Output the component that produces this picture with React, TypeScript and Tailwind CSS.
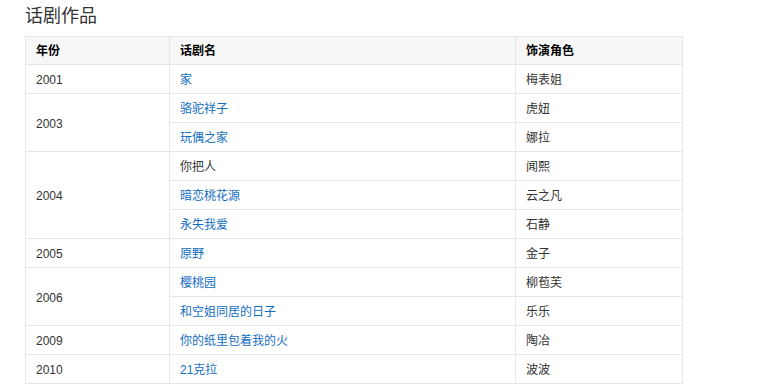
import React from "react";

type Play = { title: string; role: string; link: boolean };
type YearGroup = { year: string; plays: Play[] };

const data: YearGroup[] = [
  { year: "2001", plays: [{ title: "家", role: "梅表姐", link: true }] },
  {
    year: "2003",
    plays: [
      { title: "骆驼祥子", role: "虎妞", link: true },
      { title: "玩偶之家", role: "娜拉", link: true },
    ],
  },
  {
    year: "2004",
    plays: [
      { title: "你把人", role: "闻熙", link: false },
      { title: "暗恋桃花源", role: "云之凡", link: true },
      { title: "永失我爱", role: "石静", link: true },
    ],
  },
  { year: "2005", plays: [{ title: "原野", role: "金子", link: true }] },
  {
    year: "2006",
    plays: [
      { title: "樱桃园", role: "柳苞芙", link: true },
      { title: "和空姐同居的日子", role: "乐乐", link: true },
    ],
  },
  { year: "2009", plays: [{ title: "你的纸里包着我的火", role: "陶冶", link: true }] },
  { year: "2010", plays: [{ title: "21克拉", role: "波波", link: true }] },
];

const App = () => {
  return (
    <div
      className="min-h-screen bg-white pl-[25px] pt-[4px] text-[#333]"
      style={{ fontFamily: '"Liberation Sans", Arial, "Noto Sans CJK SC", sans-serif' }}
    >
      <h2 className="text-[18px] leading-[24px] text-[#333] mb-[8px]">话剧作品</h2>
      <table className="w-[658px] border-collapse text-[12px] leading-[14px]">
        <thead>
          <tr className="bg-[#f7f7f7]">
            <th className="w-[144px] h-[28px] border border-[#e6e6e6] px-[10px] text-left font-bold text-black">年份</th>
            <th className="w-[346px] h-[28px] border border-[#e6e6e6] px-[10px] text-left font-bold text-black">话剧名</th>
            <th className="h-[28px] border border-[#e6e6e6] px-[10px] text-left font-bold text-black">饰演角色</th>
          </tr>
        </thead>
        <tbody>
          {data.map((g) =>
            g.plays.map((p, i) => (
              <tr key={g.year + p.title}>
                {i === 0 && (
                  <td rowSpan={g.plays.length} className="border border-[#e6e6e6] px-[10px] pt-[2px]">
                    {g.year}
                  </td>
                )}
                <td className="h-[29px] border border-[#e6e6e6] px-[10px] pt-[2px]">
                  {p.link ? <a className="text-[#136ec2]">{p.title}</a> : p.title}
                </td>
                <td className="h-[29px] border border-[#e6e6e6] px-[10px] pt-[2px]">{p.role}</td>
              </tr>
            ))
          )}
        </tbody>
      </table>
    </div>
  );
};

export default App;
